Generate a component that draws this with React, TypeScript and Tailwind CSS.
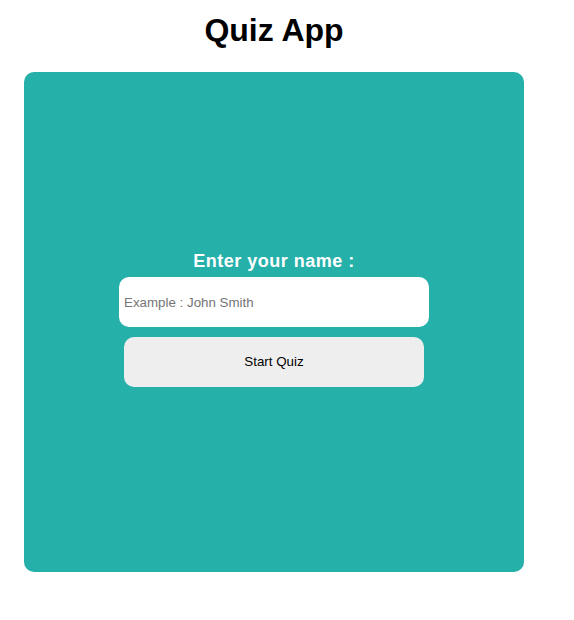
export default function App() {
  return (
    <div className="w-[574px] h-[620px] bg-white" style={{ fontFamily: '"Liberation Sans", Arial, sans-serif' }}>
      <div className="w-[500px] ml-[24px] flex flex-col">
        <h1 className="text-[32px] font-bold leading-[37px] text-black text-center mt-[12px] mb-[23px]">Quiz App</h1>
        <div className="w-[500px] h-[500px] rounded-[10px] bg-[#26b0aa] flex flex-col items-center pt-[179px]">
          <div className="text-[18px] leading-[21px] font-bold text-white tracking-[0.5px]">Enter your name :</div>
          <input
            className="mt-[5px] w-[310px] h-[50px] rounded-[10px] bg-white pl-[5px] text-[13.333px] text-black placeholder:text-[#757575] outline-none"
            placeholder="Example : John Smith"
          />
          <button className="mt-[10px] w-[300px] h-[50px] rounded-[10px] bg-[#eeeeee] text-[13.333px] text-black">Start Quiz</button>
        </div>
      </div>
    </div>
  );
}
